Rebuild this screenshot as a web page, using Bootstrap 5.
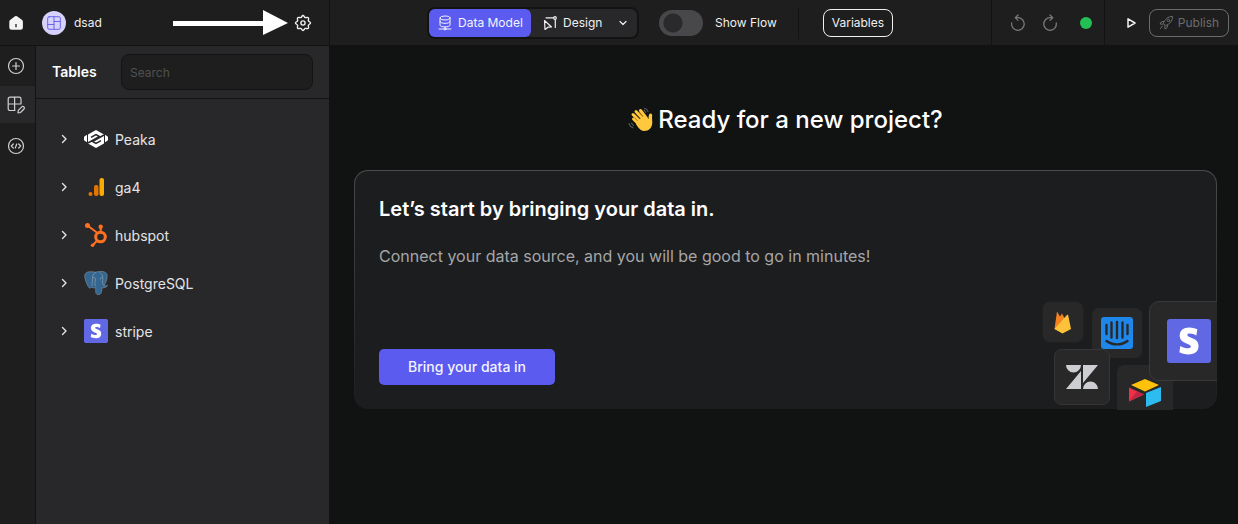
<!DOCTYPE html>
<html lang="en" data-bs-theme="dark">
<head>
<meta charset="utf-8">
<meta name="viewport" content="width=device-width, initial-scale=1">
<title>Data Model</title>
<link href="https://cdn.jsdelivr.net/npm/bootstrap@5.3.0/dist/css/bootstrap.min.css" rel="stylesheet">
<style>
body{font-family:Inter,"Liberation Sans",sans-serif;background:#111312;color:#f0f0f0;font-size:14px;line-height:20px}
svg{display:block;flex:none}
.line{fill:none;stroke:currentColor;stroke-linecap:round;stroke-linejoin:round}
button{line-height:20px}
.topbar{background:#1e1e1e;height:46px;border-bottom:1px solid #131313;font-size:12px}
.brand{width:330px;border-right:1px solid #131313;padding:0 17px 0 8px}
.brand .home{margin-right:18px}
.avatar{width:24px;height:24px;background:#d6d2fb;color:#6a64f0}
.arrow{margin-right:6px}
.icon-btn{background:none;border:0;padding:0;color:inherit}
.modes{background:#28282a;border:2px solid #131313;border-radius:8px;width:212px;margin-left:97px}
.modes .btn{font-size:12px;height:28px;padding:0 0 0 9px;border:0;border-radius:6px;gap:6px;color:#f0f0f0;white-space:nowrap}
.modes .btn + .btn{padding-left:12px}
.modes .active{background:#5b5bf0;color:#f4f4ff;width:102px}
.form-switch.flow{padding:0;min-height:0;margin:0 0 0 20px;gap:12px}
.flow .form-check-input{width:44px;height:26px;margin:0;float:none;border:0;background-color:#48484a;background-image:radial-gradient(circle at 14px 13px,#2a2a2c 9px,transparent 10px);background-size:auto;background-position:0 0}
.rule{width:1px;height:32px;background:#131313;margin:0 24px 0 21px}
.btn-line{font-size:12px;height:28px;padding:0 8px;border:1px solid #f0f0f0;border-radius:8px;color:#f0f0f0;line-height:20px}
.history{border-left:1px solid #131313;border-right:1px solid #131313;width:114px;padding:0 12px 0 18px;color:#77777a}
.status{width:12px;height:12px;background:#22c055}
.run{padding:0 9px 0 20px;gap:12px}
.publish{width:80px;border-color:#6c6c6e;color:#6c6c6e;gap:4px}
.workspace{min-height:calc(100vh - 46px)}
.rail{width:36px;background:#1e1e1e;border-right:1px solid #131313;color:#d0d0d2}
.rail button{height:40px;width:100%;padding-left:7px}
.rail .current{background:#28282a;height:37px;margin:0 0 3px}
.side{width:293px;background:#28282a}
.side-head{height:53px;border-bottom:1px solid #131313;padding:0 16px}
.side-head h2{font-size:14px;line-height:20px;font-weight:600;width:69px}
.side .form-control{height:36px;background:#1e1e1e;border:1px solid #131313;border-radius:8px;font-size:12px;padding:0 8px}
.side .form-control::placeholder{color:#505052}
.tables{padding:17px 22px}
.tables button{height:48px;color:#e4e4e6}
.tables svg{margin-bottom:2px}
.tables .logo{margin-left:14px;margin-right:7px}
.content{padding:56px 21px 24px 25px}
.hello{font-size:24px;line-height:36px;font-weight:500;margin-bottom:32px;gap:4px}
.starter{background:linear-gradient(#1c1d1f,#1c1d1f) padding-box,linear-gradient(#4a4b4c,#1c1d1f) border-box;border:1px solid transparent;border-radius:14px;padding:23px 24px}
.starter h2{font-size:20px;line-height:30px;font-weight:600;margin-bottom:20px}
.starter p{font-size:16px;line-height:24px;color:#a5a6a8;margin-bottom:81px}
.cta{background:#5b5bf0;color:#f4f4ff;width:176px;height:36px;font-size:14px;line-height:20px;font-weight:500;border:0;border-radius:5px;padding:0 0 1px}
.cta:hover{background:#6a6af4;color:#fff}
.cluster{right:-1px;bottom:-2px}
</style>
</head>
<body>
<svg width="0" height="0" class="position-absolute" aria-hidden="true">
<symbol id="chev" viewBox="0 0 16 16"><path class="line" stroke-width="1.4" d="M6.500 4.500 10 8 6.500 11.500"/></symbol>
<symbol id="stripe" viewBox="0 0 44 44"><rect width="44" height="44" rx="3" fill="#6068e4"/><path transform="translate(8.500 8.500) scale(1.120)" fill="#fff" d="M13.976 9.150c-2.172-.806-3.356-1.426-3.356-2.409 0-.831.683-1.305 1.901-1.305 2.227 0 4.515.858 6.090 1.631l.890-5.494C18.252.975 15.697 0 12.165 0 9.667 0 7.589.654 6.104 1.872 4.560 3.147 3.757 4.992 3.757 7.218c0 4.039 2.467 5.760 6.476 7.219 2.585.920 3.445 1.574 3.445 2.583 0 .980-.840 1.545-2.354 1.545-1.875 0-4.965-.921-6.990-2.109l-.900 5.555C5.175 22.990 8.385 24 11.714 24c2.641 0 4.843-.624 6.328-1.813 1.664-1.305 2.525-3.236 2.525-5.732 0-4.128-2.524-5.851-6.594-7.305h.003z"/></symbol>
</svg>
<header class="topbar d-flex align-items-stretch">
  <div class="brand d-flex align-items-center flex-shrink-0">
    <a href="#" aria-label="Home" class="home text-reset d-flex align-items-center text-decoration-none">
      <svg width="16" height="16" viewBox="0 0 16 16"><path fill="#f4f4f4" d="M7 1.300a1.600 1.600 0 0 1 2 0l4.800 3.500c.7.500 1.100 1.100 1.100 2v5.400a2.500 2.500 0 0 1-2.500 2.500H3.800a2.500 2.500 0 0 1-2.500-2.500V6.800c0-.9.400-1.500 1.100-2z"/><path stroke="#1e1e1e" stroke-width="1.300" d="M8 9v3.200"/></svg>
    </a>
    <span class="avatar rounded-circle d-flex align-items-center justify-content-center me-2">
      <svg width="14" height="14" viewBox="0 0 14 14"><g class="line"><rect x=".7" y=".7" width="12.600" height="12.600" rx="1.500"/><path d="M7 .7v12.600M.7 8.500H7M7 5.500h6.300"/></g></svg>
    </span>
    <span>dsad</span>
    <svg class="arrow ms-auto" width="116" height="26" viewBox="0 0 116 26"><path fill="#fff" d="M1 11h90V0l25 13-25 12V16H1z"/></svg>
    <button class="icon-btn" aria-label="Settings"><svg width="18" height="18" viewBox="0 0 18 18"><path class="line" stroke-width="1.400" d="M9 1.500c1.200 0 1.200 1.700 2.200 2.100s2.200-.8 3.100.1-.3 2.100.1 3.100 2.100 1 2.100 2.200-1.700 1.200-2.100 2.200.8 2.200-.1 3.100-2.100-.3-3.100.1-1 2.100-2.200 2.100-1.200-1.700-2.200-2.100-2.200.8-3.100-.1.300-2.100-.1-3.100-2.100-1-2.100-2.200 1.700-1.200 2.100-2.200-.8-2.200.1-3.100 2.100.3 3.100-.1S7.800 1.500 9 1.500z"/><circle class="line" stroke-width="1.400" cx="9" cy="9" r="2.100"/></svg></button>
  </div>
  <div class="d-flex align-items-center flex-grow-1">
    <div class="modes d-flex align-items-center">
      <button class="btn active d-flex align-items-center"><svg width="14" height="16" viewBox="0 0 14 16"><g class="line"><ellipse cx="7" cy="3" rx="5" ry="2"/><path d="M2 3v7c0 2.600 10 2.600 10 0V3M2 6.500c0 2.600 10 2.600 10 0M7 12v2M1 14h4.500M8.500 14H13"/><circle cx="7" cy="14" r="1"/></g></svg>Data Model</button>
      <button class="btn d-flex align-items-center"><svg width="14" height="14" viewBox="0 0 14 14"><g class="line" stroke-width="1.200"><path d="m1.500 4.500 7 6.500-3.500.2-3 2.300zM3 1.800h7.500M12.300 3.500v8"/><circle cx="12" cy="2" r="1.300"/></g></svg>Design</button>
      <button class="icon-btn ms-auto me-2" aria-label="More modes"><svg width="12" height="12" viewBox="0 0 12 12"><path class="line" stroke-width="1.200" d="m3 4.500 3 3 3-3"/></svg></button>
    </div>
    <div class="form-check form-switch flow d-flex align-items-center">
      <input class="form-check-input" type="checkbox" role="switch" id="flow"><label for="flow">Show Flow</label>
    </div>
    <div class="rule"></div>
    <button class="btn btn-line">Variables</button>
  </div>
  <div class="history d-flex align-items-center gap-3">
    <button class="icon-btn" aria-label="Undo"><svg width="16" height="18" viewBox="0 0 16 18"><path class="line" stroke-width="1.300" d="M1.700 9A6.300 6.300 0 1 0 8 3.700H5.500M8 1 5.300 3.700 8 6.400"/></svg></button>
    <button class="icon-btn" aria-label="Redo"><svg width="16" height="18" viewBox="0 0 16 18"><path class="line" stroke-width="1.300" d="M14.300 9A6.300 6.300 0 1 1 8 3.700h2.500M8 1l2.700 2.700L8 6.400"/></svg></button>
    <span class="status rounded-circle ms-auto"></span>
  </div>
  <div class="run d-flex align-items-center">
    <button class="icon-btn" aria-label="Run"><svg width="12" height="12" viewBox="0 0 12 12"><path class="line" stroke-width="1.500" d="m3 1.800 7 4.200-7 4.200z"/></svg></button>
    <button class="btn btn-line publish d-flex align-items-center justify-content-center"><svg width="15" height="15" viewBox="0 0 15 15"><g class="line"><path d="M4.500 8C6 4 9 1.500 13.500 1.500c0 4.500-2.500 7.500-6.500 9zM5 6.500 2.500 6.800 1 9l3 .2M8.500 10l-.300 2.500L6 14l-.200-3"/><circle cx="9.500" cy="5.500" r="1.200"/><path d="M3.500 11 1.500 13.500"/></g></svg>Publish</button>
  </div>
</header>
<div class="workspace d-flex">
  <nav class="rail flex-shrink-0" aria-label="Tools">
    <button class="icon-btn d-flex align-items-center" aria-label="Add"><svg width="18" height="18" viewBox="0 0 18 18"><g class="line" stroke-width="1.200"><circle cx="9" cy="9" r="7.500"/><path d="M9 5.500v7M5.500 9h7"/></g></svg></button>
    <button class="icon-btn current d-flex align-items-center" aria-label="Tables"><svg width="18" height="18" viewBox="0 0 18 18"><g class="line" stroke-width="1.200"><path d="M8 14.500H3A1.800 1.800 0 0 1 1.200 12.700V3A1.800 1.800 0 0 1 3 1.200h9.200A1.800 1.800 0 0 1 14 3v5M7.600 1.200v13.300M1.200 8H14"/><path d="m11 16.800.300-2.500 3.500-3.500c1.500-1 3.300.6 2.200 2.200l-3.500 3.500z"/></g></svg></button>
    <button class="icon-btn d-flex align-items-center" aria-label="Code"><svg width="18" height="18" viewBox="0 0 18 18"><g class="line" stroke-width="1.200"><circle cx="9" cy="9" r="7.500"/><path d="M6.300 7 4.300 9l2 2M11.700 7l2 2-2 2M9.700 7l-1.400 4"/></g></svg></button>
  </nav>
  <aside class="side flex-shrink-0">
    <div class="side-head d-flex align-items-center">
      <h2 class="mb-0 flex-shrink-0">Tables</h2>
      <input class="form-control" type="search" placeholder="Search" aria-label="Search tables">
    </div>
    <ul class="tables list-unstyled mb-0">
      <li><button class="icon-btn d-flex align-items-center w-100"><svg width="12" height="16" viewBox="2 0 12 16"><use href="#chev" width="16" height="16"/></svg>
        <svg class="logo" width="24" height="24" viewBox="0 0 24 24"><path fill="#fff" d="M12 3 20 7.500v9L12 21 4 16.500v-9zM3 7.700v7.600L0 13.300V9.700zM21 7.700v7.600l3-2V9.700z"/><path fill="none" stroke="#28282a" stroke-width="1.500" d="m7 10.300 5-2.800 3.500 2L4 16M17 13.700l-5 2.800-3.500-2L20 8"/></svg>Peaka</button></li>
      <li><button class="icon-btn d-flex align-items-center w-100"><svg width="12" height="16" viewBox="2 0 12 16"><use href="#chev" width="16" height="16"/></svg>
        <svg class="logo" width="24" height="24" viewBox="0 0 24 24"><rect x="15.500" y="3" width="4.500" height="18" rx="2" fill="#f9ab00"/><rect x="10" y="10" width="4.500" height="11" rx="2" fill="#e37400"/><circle cx="6.500" cy="19" r="2" fill="#e37400"/></svg>ga4</button></li>
      <li><button class="icon-btn d-flex align-items-center w-100"><svg width="12" height="16" viewBox="2 0 12 16"><use href="#chev" width="16" height="16"/></svg>
        <svg class="logo" width="24" height="24" viewBox="0 0 24 24"><g fill="#ff7020"><circle cx="3.500" cy="2.500" r="2.500"/><circle cx="16.700" cy="3.800" r="2.200"/><circle cx="8.600" cy="22.200" r="1.800"/></g><g fill="none" stroke="#ff7020"><circle cx="16.500" cy="14" r="4.800" stroke-width="3"/><path stroke-width="2" d="M16.700 4v6M3.500 2.500l10 7.500M13.200 17.500l-4.500 4.700"/></g></svg>hubspot</button></li>
      <li><button class="icon-btn d-flex align-items-center w-100"><svg width="12" height="16" viewBox="2 0 12 16"><use href="#chev" width="16" height="16"/></svg>
        <svg class="logo" width="24" height="24" viewBox="0 0 24 24"><path fill="#336791" stroke="#8c9298" stroke-width=".6" d="M8 .8c2 0 3 .5 4 .3 1.500-.5 3-.8 4.500-.8 4 0 7 1.500 6.700 5-.200 3.500-1.700 7.500-3.200 9.200 1.500.5 3 .2 3.500 0-.6 1.500-3 2.500-5.500 2.300-.3 3-.3 7-3.500 7-2.500 0-2.800-2-2.800-3.800v-3.500c-1 .8-3 .6-3.700-.5-1.500 1.500-3 1.500-4-.8C2.500 12 .7 8 .7 5 .7 1.500 4 .3 8 .8z"/><path fill="none" stroke="#9aa4ad" stroke-width=".6" d="M12 1.500C8 3 8.500 7 8.500 9c0 3-1 4-.5 6M15.500 1.500c3 1.500 4 5 3 8-.5 2 .5 3.500 1.300 5M8.500 7c1.500-1 3-.5 3 1 0 3-1.500 4 0 7M18.800 7c-1.500-.7-3-.3-2.500 1.500"/></svg>PostgreSQL</button></li>
      <li><button class="icon-btn d-flex align-items-center w-100"><svg width="12" height="16" viewBox="2 0 12 16"><use href="#chev" width="16" height="16"/></svg>
        <svg class="logo" width="24" height="24"><use href="#stripe" width="24" height="24"/></svg>stripe</button></li>
    </ul>
  </aside>
  <main class="content flex-grow-1">
    <h1 class="hello d-flex align-items-center justify-content-center">
      <svg width="26" height="26" viewBox="0 0 26 26"><g fill="none" stroke-linecap="round"><g stroke="#ffc83d" stroke-width="3"><path d="m5.500 12 8 8M5 7.500l10 10M8 4.500l9 9.500M12.500 3.500l6 8"/></g><path stroke="#a96b12" stroke-width=".8" d="m6.500 10.800 5.500 5.500M8 7.500l7 7M11.500 5.500l5.500 6.300"/></g><path fill="#ffc83d" d="M8.500 14.500 16.500 8.500l4 3.500c.3-2-.2-5 2-5.500 1.500 0 2 1.500 1.500 4l.3 5c0 5-3.500 8.500-8 8.500-3.500 0-6.500-3.500-8.300-7z"/><g fill="none" stroke="#55585a" stroke-width="1.100" stroke-linecap="round"><path d="M16.500 1.200c1.800.4 3 1.800 3.500 3.500M1 16.500c.5 2 2 3.500 4 4.300M16 3.200l1.600 2M3.500 16.200l2 2.300"/></g></svg>
      <span>Ready for a new project?</span>
    </h1>
    <section class="starter position-relative">
      <h2>Let’s start by bringing your data in.</h2>
      <p>Connect your data source, and you will be good to go in minutes!</p>
      <button class="btn cta">Bring your data in</button>
      <svg class="cluster position-absolute" width="177" height="110" viewBox="0 0 177 110" aria-hidden="true">
        <rect x="3" y="2" width="40" height="40" rx="7" fill="#282828" stroke="#262728"/>
        <path fill="#f58220" d="M14.500 29 17 11.500l3 5 2-3 8 15-8 4z"/><path fill="#fdc239" d="m14.500 29 12-13.500 1.500-1 3 14.500-8.500 4.500z"/>
        <rect x="52" y="8" width="50" height="50" rx="7" fill="#282828"/>
        <rect x="61" y="17" width="32" height="32" rx="3" fill="#1f87ea"/><path fill="none" stroke="#282828" stroke-width="2.400" stroke-linecap="round" d="M66.500 25v9M71.500 22.500v15M77 22v16M82.500 22.500v15M87.500 25v9M66.500 41c6 4.500 15 4.500 21 0"/>
        <path fill="#282828" d="M77 110V72a7 7 0 0 1 7-7h42a7 7 0 0 1 7 7v38z"/>
        <path fill="#ffc20a" d="m91 85 14-6 14 6-14 6.500z"/><path fill="#ee3048" d="m89 87.500 15 7-15 7z"/><path fill="#c12743" d="m89 101.500 8-10.200 7 3.200z"/><path fill="#2dbcf0" d="m106 93 15-6v14l-15 6z"/>
        <rect x="14.500" y="49.500" width="55" height="55" rx="7" fill="#282828" stroke="#363636"/>
        <path fill="#cdced2" d="M26 65h15a7.500 7.500 0 0 1-15 0zM43 65h15L43 83zM41 71v18H26zM43 89a7.500 7.500 0 0 1 15 0z"/>
        <path fill="#282828" stroke="#3a3a3a" d="M178 1.500h-59a9.500 9.500 0 0 0-9.500 9.500v60a9.500 9.500 0 0 0 9.500 9.500h59z"/>
        <use href="#stripe" x="127" y="19" width="44" height="44"/>
      </svg>
    </section>
  </main>
</div>
<script src="https://cdn.jsdelivr.net/npm/bootstrap@5.3.0/dist/js/bootstrap.bundle.min.js"></script>
</body>
</html>
